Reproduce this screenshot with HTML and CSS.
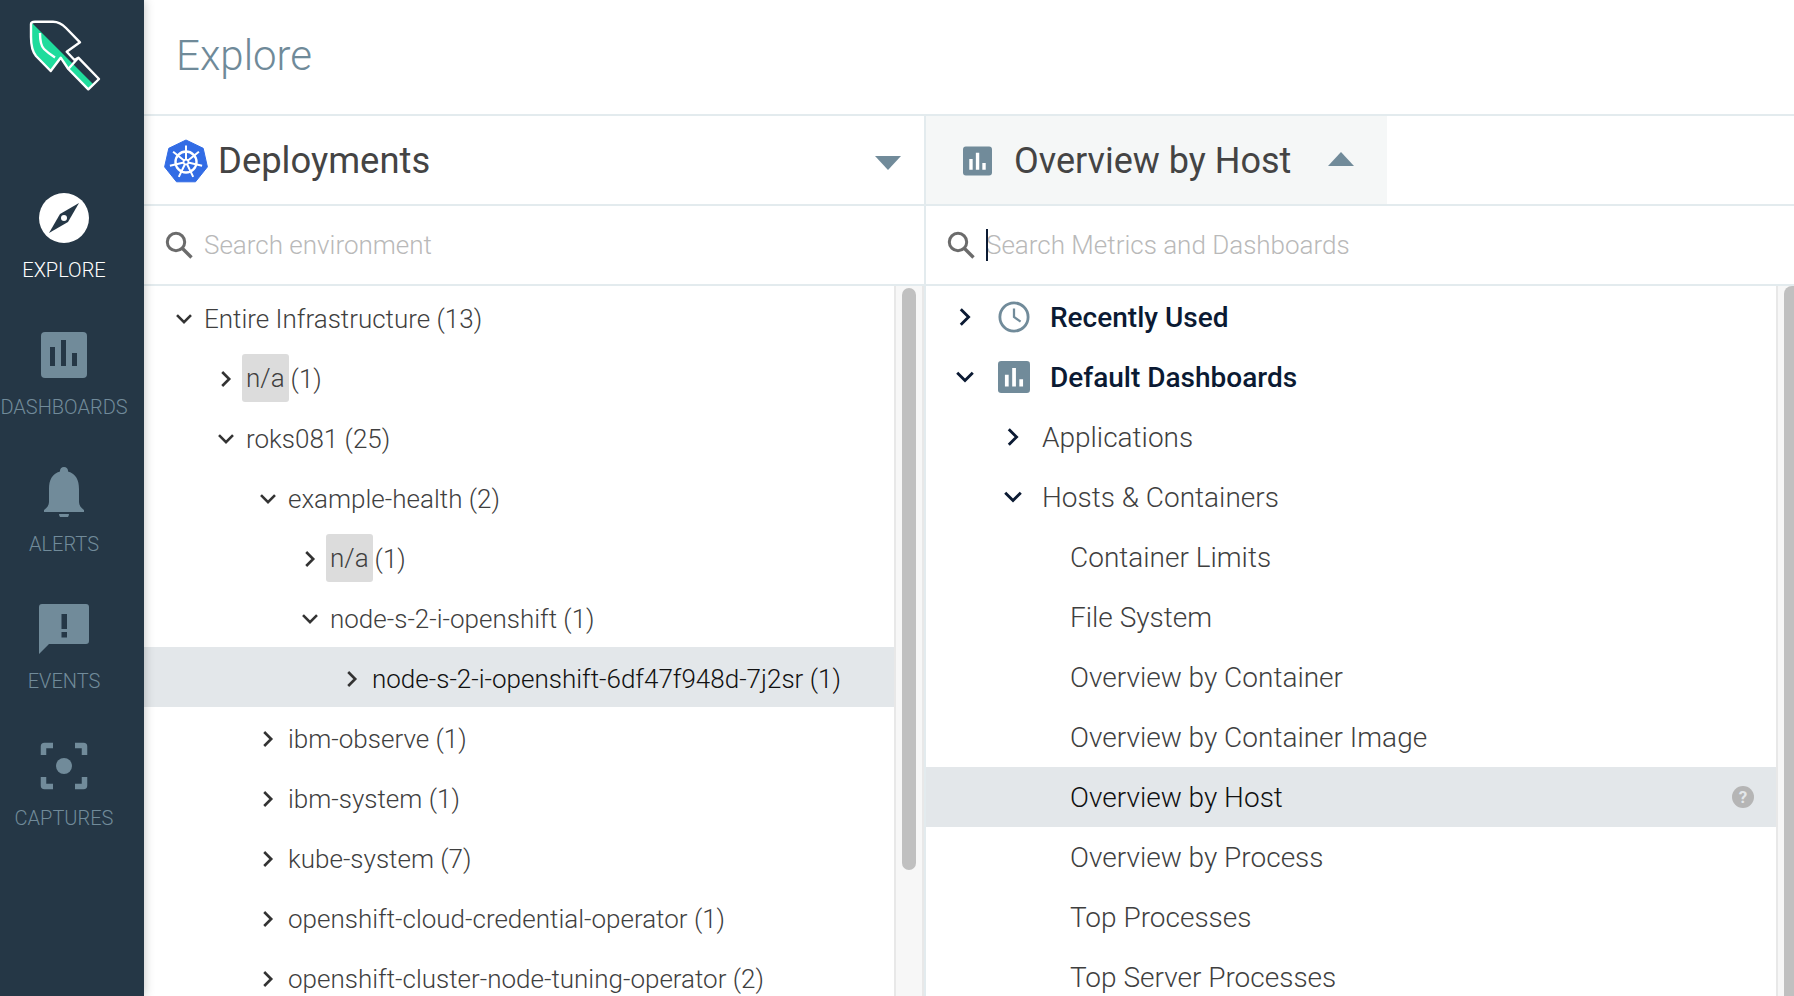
FILE: index.html
```html
<!DOCTYPE html>
<html lang="en">
<head>
<meta charset="utf-8">
<title>Explore</title>
<link rel="stylesheet" href="styles.css">
</head>
<body>
<svg class="defs" width="0" height="0" aria-hidden="true">
  <defs>
    <symbol id="chev-r" viewBox="0 0 18 18"><path d="M5.200 2 12.200 9l-7 7" fill="none" stroke="currentColor" stroke-width="2.600"/></symbol>
    <symbol id="chev-d" viewBox="0 0 18 18"><path d="M2 5.200 9 12.200l7-7" fill="none" stroke="currentColor" stroke-width="2.600"/></symbol>
    <symbol id="search" viewBox="0 0 28 28"><circle cx="11" cy="11" r="8.700" fill="none" stroke="currentColor" stroke-width="3"/><path d="m17.500 17.500 9 9" stroke="currentColor" stroke-width="3.400" fill="none"/></symbol>
    <symbol id="bars" viewBox="0 0 30 30"><rect width="30" height="30" rx="3" fill="#718b9a"/><path d="M6.500 13h3.500v11H6.500zM13.300 6.500h3.500V24h-3.500zM20 17h3.500v7H20z" fill="#fff"/></symbol>
  </defs>
</svg>
<div class="app">
  <nav class="sidebar">
    <div class="logo">
      <svg width="80" height="80" viewBox="25 18 80 80">
        <path d="M32 23 94 85 88.300 89.300 68.300 69 60.700 57.700 50.700 71 36 56Q31 50 31 40Z" fill="#1fdc9c"/>
        <path d="M31 24Q31 21.700 35 21.700H53Q60 21.700 66 28L80 42.300 66.700 51.700 74.500 60 78.300 57.700 99 79 88.300 89.300 68.300 69 60.700 57.700 50.700 71 36 56Q31 50 31 37Z" fill="none" stroke="#fff" stroke-width="2.400" stroke-linejoin="round"/>
        <path d="M40 33Q40 45 44 49T55 57.500" fill="none" stroke="#fff" stroke-width="2.400"/>
        <path d="M68.300 69 78.300 57.700" fill="none" stroke="#fff" stroke-width="2.400"/>
      </svg>
    </div>
    <a class="nav-item active">
      <svg class="nav-icon" viewBox="0 0 50 50"><circle cx="25" cy="25" r="25" fill="#fff"/><path d="M40 10 29 29 10 40 21 21Z" fill="#253746"/><circle cx="25" cy="25" r="3" fill="#fff"/></svg>
      <span>EXPLORE</span>
    </a>
    <a class="nav-item">
      <svg class="nav-icon" viewBox="0 0 50 50"><rect x="2" y="2" width="46" height="46" rx="4" fill="#718b9a"/><path d="M11 17h5v19h-5zM22 10h5v26h-5zM33 23h5v13h-5z" fill="#253746"/></svg>
      <span>DASHBOARDS</span>
    </a>
    <a class="nav-item">
      <svg class="nav-icon" viewBox="0 0 50 50"><path d="M25 0a4 4 0 0 1 4 4.500C37 7 40 13 40 22v13c0 3 2 6 5 8v2H5v-2c3-2 5-5 5-8V22c0-9 3-15 11-17.500A4 4 0 0 1 25 0Z" fill="#718b9a"/><path d="M20 47h10a5 5 0 0 1-10 0Z" fill="#718b9a"/></svg>
      <span>ALERTS</span>
    </a>
    <a class="nav-item">
      <svg class="nav-icon" viewBox="0 0 50 50"><path d="M3 0h44a3 3 0 0 1 3 3v34a3 3 0 0 1-3 3H10L0 50V3a3 3 0 0 1 3-3Z" fill="#718b9a"/><path d="M22.500 10h5.500v15h-5.500zM22.500 28h5.500v5.500h-5.500z" fill="#253746"/></svg>
      <span>EVENTS</span>
    </a>
    <a class="nav-item">
      <svg class="nav-icon" viewBox="0 0 50 50"><path d="M14 4.500H5.500a1 1 0 0 0-1 1V14M36 4.500h8.500a1 1 0 0 1 1 1V14M14 45.500H5.500a1 1 0 0 1-1-1V36M36 45.500h8.500a1 1 0 0 0 1-1V36" fill="none" stroke="#718b9a" stroke-width="5.500"/><circle cx="25" cy="25" r="8" fill="#718b9a"/></svg>
      <span>CAPTURES</span>
    </a>
  </nav>
  <main class="content">
    <header class="page-head"><h1>Explore</h1></header>
    <div class="panels">
      <section class="panel left">
        <div class="sel-row">
          <button class="selector">
            <svg class="k8s" viewBox="0 0 44 44">
              <path d="M22 1 39.200 9.300 43.400 27.900 31.500 42.800H12.500L.6 27.900 4.800 9.300Z" fill="#326ce5" stroke="#326ce5" stroke-width="1" stroke-linejoin="round"/>
              <circle cx="22" cy="23" r="10.500" fill="none" stroke="#fff" stroke-width="2.400"/>
              <path d="M22 23V6.500M22 23 34.900 12.700M22 23 38.100 26.700M22 23 29.200 37.900M22 23 14.800 37.900M22 23 5.900 26.700M22 23 9.100 12.700" stroke="#fff" stroke-width="2" fill="none"/>
              <circle cx="22" cy="23" r="2.400" fill="#326ce5" stroke="#fff" stroke-width="1.600"/>
            </svg>
            <span class="sel-title">Deployments</span>
            <span class="tri-down"></span>
          </button>
        </div>
        <div class="search">
          <svg class="search-ic"><use href="#search"/></svg>
          <span class="ph">Search environment</span>
        </div>
        <div class="scroll">
          <ul class="tree">
            <li class="row d0"><svg class="chev"><use href="#chev-d"/></svg><span>Entire Infrastructure (13)</span></li>
            <li class="row d1"><svg class="chev"><use href="#chev-r"/></svg><span class="na">n/a</span><span>(1)</span></li>
            <li class="row d1"><svg class="chev"><use href="#chev-d"/></svg><span>roks081 (25)</span></li>
            <li class="row d2"><svg class="chev"><use href="#chev-d"/></svg><span>example-health (2)</span></li>
            <li class="row d3"><svg class="chev"><use href="#chev-r"/></svg><span class="na">n/a</span><span>(1)</span></li>
            <li class="row d3"><svg class="chev"><use href="#chev-d"/></svg><span>node-s-2-i-openshift (1)</span></li>
            <li class="row d4 selected"><svg class="chev"><use href="#chev-r"/></svg><span>node-s-2-i-openshift-6df47f948d-7j2sr (1)</span></li>
            <li class="row d2"><svg class="chev"><use href="#chev-r"/></svg><span>ibm-observe (1)</span></li>
            <li class="row d2"><svg class="chev"><use href="#chev-r"/></svg><span>ibm-system (1)</span></li>
            <li class="row d2"><svg class="chev"><use href="#chev-r"/></svg><span>kube-system (7)</span></li>
            <li class="row d2"><svg class="chev"><use href="#chev-r"/></svg><span>openshift-cloud-credential-operator (1)</span></li>
            <li class="row d2"><svg class="chev"><use href="#chev-r"/></svg><span>openshift-cluster-node-tuning-operator (2)</span></li>
          </ul>
          <div class="track"><div class="thumb"></div></div>
        </div>
      </section>
      <section class="panel right">
        <div class="sel-row">
          <button class="selector open">
            <svg class="bars-lg"><use href="#bars"/></svg>
            <span class="sel-title">Overview by Host</span>
            <span class="tri-up"></span>
          </button>
        </div>
        <div class="search">
          <svg class="search-ic"><use href="#search"/></svg>
          <span class="caret"></span>
          <span class="ph">Search Metrics and Dashboards</span>
        </div>
        <div class="scroll">
          <ul class="list">
            <li class="item top"><svg class="chev"><use href="#chev-r"/></svg>
              <svg class="top-ic" viewBox="0 0 34 34"><circle cx="17" cy="17" r="15" fill="none" stroke="#718b9a" stroke-width="3"/><path d="M17 8v9l7 5" fill="none" stroke="#718b9a" stroke-width="2.400"/></svg>
              <span>Recently Used</span></li>
            <li class="item top"><svg class="chev"><use href="#chev-d"/></svg>
              <svg class="top-ic"><use href="#bars"/></svg>
              <span>Default Dashboards</span></li>
            <li class="item group"><svg class="chev"><use href="#chev-r"/></svg><span>Applications</span></li>
            <li class="item group"><svg class="chev"><use href="#chev-d"/></svg><span>Hosts &amp; Containers</span></li>
            <li class="item leaf">Container Limits</li>
            <li class="item leaf">File System</li>
            <li class="item leaf">Overview by Container</li>
            <li class="item leaf">Overview by Container Image</li>
            <li class="item leaf selected">Overview by Host
              <svg class="help" viewBox="0 0 22 22"><circle cx="11" cy="11" r="11" fill="#b5b5b5"/><text x="11" y="17" text-anchor="middle" class="help-q">?</text></svg>
            </li>
            <li class="item leaf">Overview by Process</li>
            <li class="item leaf">Top Processes</li>
            <li class="item leaf">Top Server Processes</li>
          </ul>
          <div class="track"><div class="thumb thumb-right"></div></div>
        </div>
      </section>
    </div>
  </main>
</div>
</body>
</html>
```
FILE: styles.css
```css
* { box-sizing: border-box; }
html, body { margin: 0; height: 100%; overflow: hidden; background: #fff; }
body { font-family: Roboto, "Liberation Sans", sans-serif; color: #444; }
ul { list-style: none; margin: 0; padding: 0; }
.defs { position: absolute; }
.app { display: flex; height: 996px; }

.sidebar { width: 144px; flex: none; background: #253746; display: flex; flex-direction: column; align-items: flex-start; box-shadow: 0 0 10px rgba(0,0,0,.25); position: relative; z-index: 2; }
.logo { height: 193px; padding: 18px 0 0 25px; }
.logo svg { display: block; }
.nav-item { width: 128px; height: 137px; display: flex; flex-direction: column; align-items: center; color: #718b9a; font-size: 20px; font-weight: 300; line-height: 24px; white-space: nowrap; }
.nav-item.active { color: #fff; }
.nav-icon { width: 50px; height: 50px; margin-bottom: 15px; display: block; flex: none; }

.content { flex: 1; min-width: 0; display: flex; flex-direction: column; }
.page-head { height: 116px; border-bottom: 2px solid #e3ebee; padding: 31px 0 0 32px; flex: none; }
h1 { margin: 0; font-size: 42px; line-height: 50px; font-weight: 300; color: #6f8a99; }

.panels { flex: 1; display: flex; min-height: 0; }
.panel { display: flex; flex-direction: column; min-width: 0; }
.left { width: 782px; border-right: 2px solid #e3ebee; }
.right { flex: 1; }

.sel-row { height: 90px; border-bottom: 2px solid #e3ebee; display: flex; flex: none; }
.selector { border: 0; background: none; padding: 0; font: inherit; color: inherit; display: flex; align-items: center; height: 88px; }
.left .selector { width: 100%; padding: 2px 23px 0 20px; }
.right .selector { width: 461px; padding: 2px 33px 0 37px; background: #f5f7f7; }
.k8s { width: 44px; height: 44px; margin-right: 10px; flex: none; }
.bars-lg { width: 29px; height: 30px; margin-right: 22px; flex: none; }
.sel-title { font-size: 36px; line-height: 44px; }
.left .sel-title { font-size: 36.400px; }
.tri-down { margin: 4px 0 0 auto; border: 13.500px solid transparent; border-top: 14px solid #718b9a; border-bottom: 0; }
.tri-up { margin: 0 0 4px auto; border: 13.500px solid transparent; border-bottom: 14px solid #718b9a; border-top: 0; }

.search { height: 80px; border-bottom: 2px solid #e3ebee; display: flex; align-items: center; flex: none; color: #6b6b6b; }
.left .search { padding-left: 21px; }
.right .search { padding-left: 21px; }
.search-ic { width: 28px; height: 28px; flex: none; color: #6b6b6b; }
.ph { font-size: 26px; font-weight: 300; color: #b9b9b9; line-height: 32px; }
.left .ph { margin-left: 11px; }
.right .ph { margin-left: -2px; }
.caret { width: 2px; height: 32px; background: #0b1a33; margin-left: 11px; flex: none; position: relative; z-index: 1; }

.scroll { flex: 1; min-height: 0; display: flex; overflow: hidden; }
.tree, .list { flex: 1; min-width: 0; padding-top: 1px; }
.track { flex: none; background: #f7f7f7; border-left: 2px solid #e8e8e8; }
.left .track { width: 30px; padding: 2px 6px 0 6px; border-right: 2px solid #e8e8e8; }
.right .track { width: 18px; padding: 0 0 0 6px; }
.thumb { height: 582px; background: #c0c0c0; border-radius: 8px; }
.thumb-right { height: 100%; border-radius: 8px 0 0 0; }

.row, .item { height: 60px; display: flex; align-items: center; font-weight: 300; color: #3f3f3f; white-space: nowrap; flex: none; }
.row { font-size: 26px; padding-top: 4px; }
.item { font-size: 28px; }
.chev { flex: none; color: #333; }
.row .chev { width: 18px; height: 18px; margin-right: 11px; margin-left: 1px; }
.item .chev { width: 20px; height: 20px; }
.row.d0 { padding-left: 30px; }
.row.d1 { padding-left: 72px; }
.row.d2 { padding-left: 114px; }
.row.d3 { padding-left: 156px; }
.row.d4 { padding-left: 198px; }
.row.selected, .item.selected { background: #e3e7ea; color: #111; }
.na { background: #dcdcdc; border-radius: 3px; height: 48px; line-height: 48px; padding: 0 4px; margin: -2px 2px 0 -4px; }

.item.top { padding-left: 29px; font-weight: 500; color: #0b1a33; }
.item.top .chev, .item.group .chev { color: #0b1a33; }
.top-ic { width: 32px; height: 32px; margin: 0 20px 0 23px; flex: none; }
.item.group { padding-left: 77px; }
.item.group .chev { margin-right: 19px; }
.item.leaf { padding-left: 144px; justify-content: space-between; padding-right: 22px; }
.help { width: 22px; height: 22px; }
.help-q { font: 700 17px Roboto, "Liberation Sans", sans-serif; fill: #e3e7ea; }
```
